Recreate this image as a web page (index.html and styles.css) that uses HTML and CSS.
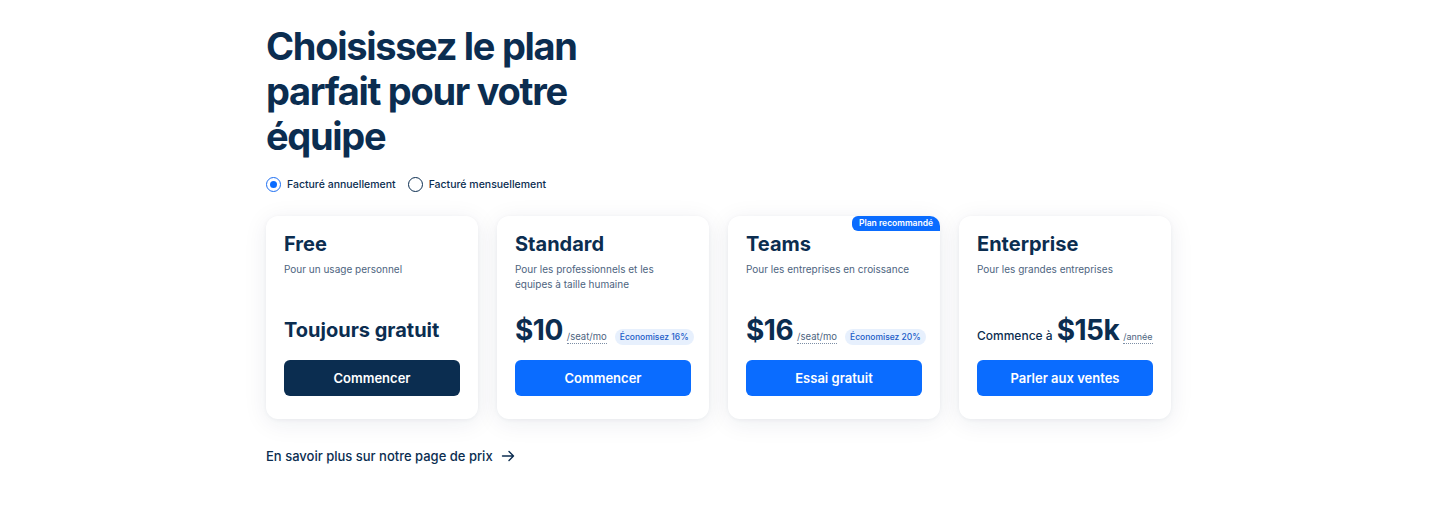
FILE: index.html
```html
<!DOCTYPE html>
<html lang="fr">
<head>
<meta charset="utf-8">
<link rel="stylesheet" href="styles.css">
</head>
<body>
<main class="pricing">
  <h1 class="title">Choisissez le plan<br>parfait pour votre<br>équipe</h1>
  <div class="billing">
    <label class="radio"><span class="dot checked"></span>Facturé annuellement</label>
    <label class="radio"><span class="dot"></span>Facturé mensuellement</label>
  </div>
  <div class="cards">
    <div class="card">
      <h2 class="name">Free</h2>
      <p class="desc">Pour un usage personnel</p>
      <div class="price"><span class="free">Toujours gratuit</span></div>
      <a class="btn dark">Commencer</a>
    </div>
    <div class="card">
      <h2 class="name">Standard</h2>
      <p class="desc">Pour les professionnels et les équipes à taille humaine</p>
      <div class="price"><span class="amount">$10</span><span class="unit">/seat/mo</span><span class="save">Économisez 16%</span></div>
      <a class="btn">Commencer</a>
    </div>
    <div class="card">
      <span class="badge">Plan recommandé</span>
      <h2 class="name">Teams</h2>
      <p class="desc">Pour les entreprises en croissance</p>
      <div class="price"><span class="amount">$16</span><span class="unit">/seat/mo</span><span class="save">Économisez 20%</span></div>
      <a class="btn">Essai gratuit</a>
    </div>
    <div class="card">
      <h2 class="name">Enterprise</h2>
      <p class="desc">Pour les grandes entreprises</p>
      <div class="price"><span class="from">Commence à</span><span class="amount">$15k</span><span class="unit small">/année</span></div>
      <a class="btn">Parler aux ventes</a>
    </div>
  </div>
  <a class="more">En savoir plus sur notre page de prix
    <svg class="arrow" width="14" height="14" viewBox="0 0 14 14" fill="none" stroke="#0b2d50" stroke-width="1.4" stroke-linecap="round" stroke-linejoin="round"><path d="M1.5 7h11M8 2.5 12.5 7 8 11.5"/></svg>
  </a>
</main>
</body>
</html>
```

FILE: styles.css
```css
* { box-sizing: border-box; }
html, body { margin: 0; background: #fff; }
body {
  font-family: Inter, "Noto Sans", sans-serif;
  color: #0b2d50;
}
.pricing {
  width: 905px;
  margin-left: 266px;
  padding-top: 24px;
}
.title {
  margin: 0;
  font-size: 38px;
  line-height: 45px;
  font-weight: 700;
  letter-spacing: -1.3px;
  color: #0b2d50;
}
.billing {
  display: flex;
  gap: 12px;
  margin-top: 18px;
  align-items: center;
}
.radio {
  display: flex;
  align-items: center;
  gap: 6px;
  font-size: 10.5px;
  font-weight: 500;
  color: #0b2d50;
}
.dot {
  width: 15px;
  height: 15px;
  border: 1px solid #0b2d50;
  border-radius: 50%;
  display: inline-flex;
  align-items: center;
  justify-content: center;
}
.dot.checked { border-color: #1c6ef2; }
.dot.checked::after {
  content: "";
  width: 7px;
  height: 7px;
  border-radius: 50%;
  background: #0a6cff;
}
.cards {
  display: grid;
  grid-template-columns: repeat(4, 212px);
  gap: 19px;
  margin-top: 24px;
}
.card {
  position: relative;
  background: #fff;
  border-radius: 12px;
  padding: 16px 18px 23px;
  box-shadow: 0 4px 24px rgba(20, 40, 80, 0.08), 0 1px 4px rgba(20, 40, 80, 0.05);
  display: flex;
  flex-direction: column;
  height: 203px;
}
.badge {
  position: absolute;
  top: 0;
  right: 0;
  background: #0a6cff;
  color: #fff;
  font-size: 8.5px;
  font-weight: 600;
  padding: 2px 7px 3px;
  border-radius: 6px 10px 0 6px;
}
.name {
  margin: 0;
  font-size: 20px;
  line-height: 24px;
  font-weight: 700;
  color: #0b2d50;
}
.desc {
  margin: 6px 0 0;
  font-size: 10px;
  line-height: 15px;
  color: #4d6480;
  max-width: 170px;
}
.price {
  margin-top: auto;
  display: flex;
  align-items: baseline;
  gap: 4px;
  white-space: nowrap;
  height: 34px;
}
.free {
  font-size: 20px;
  line-height: 34px;
  font-weight: 700;
  color: #0b2d50;
}
.amount {
  font-size: 28px;
  line-height: 34px;
  font-weight: 700;
  letter-spacing: -0.5px;
  color: #0b2d50;
}
.unit {
  font-size: 9.5px;
  color: #4d6480;
  border-bottom: 1px dotted #7d8ea5;
  padding-bottom: 1px;
}
.unit.small { font-size: 9px; }
.from {
  font-size: 12px;
  font-weight: 500;
  color: #0b2d50;
}
.save {
  margin-left: 4px;
  font-size: 8.5px;
  font-weight: 500;
  color: #1b5cc8;
  background: #e7f0fd;
  border-radius: 8px;
  padding: 3px 5px;
  white-space: nowrap;
}
.btn {
  display: flex;
  align-items: center;
  justify-content: center;
  height: 36px;
  margin-top: 13px;
  border-radius: 6px;
  background: #0a6cff;
  color: #fff;
  font-size: 13px;
  font-weight: 600;
}
.btn.dark { background: #0b2d50; }
.more {
  display: inline-flex;
  align-items: center;
  gap: 8px;
  margin-top: 29px;
  font-size: 13px;
  font-weight: 500;
  color: #0b2d50;
}
```
